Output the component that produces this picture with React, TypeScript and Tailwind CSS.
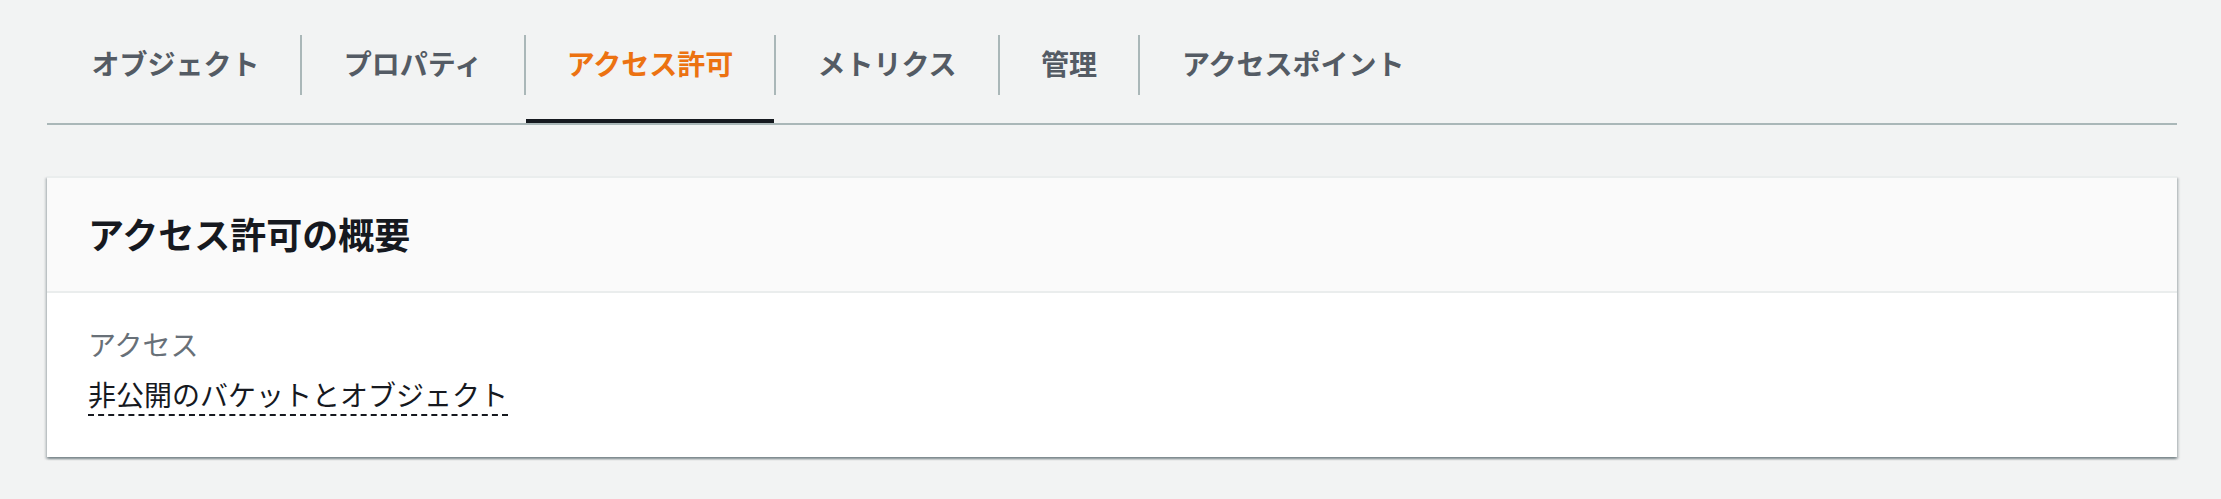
const tabs = [
  { label: 'オブジェクト', width: 'w-[253px] pl-[4px]' },
  { label: 'プロパティ', width: 'w-[222px]' },
  { label: 'アクセス許可', width: 'w-[248px]', active: true },
  { label: 'メトリクス', width: 'w-[222px]' },
  { label: '管理', width: 'w-[138px]' },
  { label: 'アクセスポイント', width: 'px-[42px]' },
];

const App = () => {
  return (
    <div className="min-h-[499px] bg-[#f2f3f3] pl-[47px] pr-[44px] pt-[7px] font-['Noto_Sans_CJK_JP','Noto_Sans',sans-serif]">
      {/* Tabs */}
      <div className="flex items-stretch border-b-2 border-[#aab7b8]">
        {tabs.map((tab, index) => (
          <div key={tab.label} className="flex items-center">
            {index > 0 && <div className="h-[60px] w-[2px] bg-[#aab7b8]" />}
            <div
              className={`flex h-[116px] items-center justify-center border-b-4 text-[28px] font-bold leading-[40px] ${tab.width} ${
                tab.active ? 'border-[#16191f] text-[#ec7211]' : 'border-transparent text-[#545b64]'
              }`}
            >
              {tab.label}
            </div>
          </div>
        ))}
      </div>

      {/* Permissions overview card */}
      <div className="mt-[51px] border-t-2 border-[#eaeded] bg-white shadow-[0_2px_2px_0_rgba(0,28,36,0.3),2px_2px_2px_0_rgba(0,28,36,0.15),-2px_2px_2px_0_rgba(0,28,36,0.15)]">
        <div className="border-b-2 border-[#eaeded] bg-[#fafafa] pt-[33px] pb-[35px] pl-[41px] pr-10">
          <h2 className="text-[36px] font-bold leading-[45px] text-[#16191f]">アクセス許可の概要</h2>
        </div>
        <div className="pt-[31px] pb-[41px] pl-[41px] pr-10">
          <div className="text-[28px] leading-[40px] text-[#687078]">アクセス</div>
          <div className="mt-[10px]">
            <span className="inline-block border-b-2 border-dashed border-[#16191f] text-[28px] leading-[40px] text-[#16191f]">
              非公開のバケットとオブジェクト
            </span>
          </div>
        </div>
      </div>
    </div>
  );
};

export default App;
